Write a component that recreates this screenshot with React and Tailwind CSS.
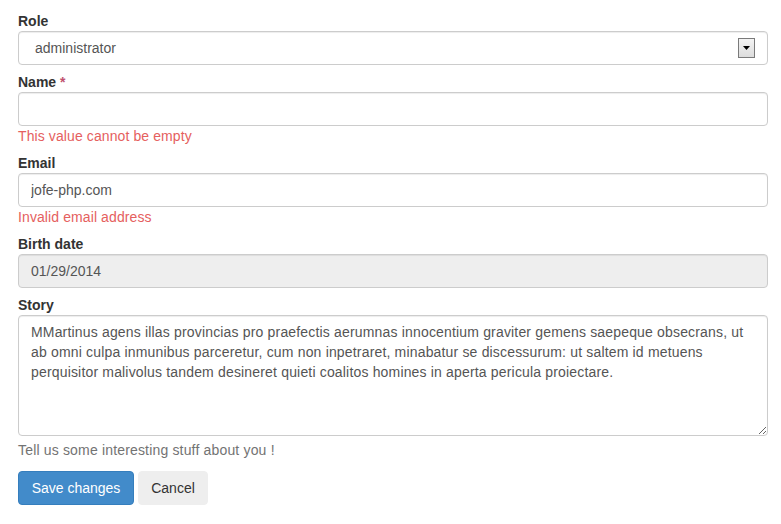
import React from 'react'

const story =
  'MMartinus agens illas provincias pro praefectis aerumnas innocentium graviter gemens saepeque obsecrans, ut ab omni culpa inmunibus parceretur, cum non inpetraret, minabatur se discessurum: ut saltem id metuens perquisitor malivolus tandem desineret quieti coalitos homines in aperta pericula proiectare.'

const baseCls =
  'block w-full h-[34px] px-3 border border-[#ccc] rounded text-[14px] leading-5 text-[#555] shadow-[inset_0_1px_1px_rgba(0,0,0,0.075)] outline-none'

const Label = ({ children }) => (
  <label className="block text-[14px] leading-5 font-bold text-[#333]">{children}</label>
)

const ErrorText = ({ children }) => (
  <p className="text-[14px] leading-5 text-[#e5605e] tracking-[0.1px]">{children}</p>
)

export default function App() {
  return (
    <div className="w-[781px] h-[524px] bg-white pl-[18px] pr-[13px] pt-[11px] font-['Liberation_Sans',Arial,sans-serif]">
      <form className="flex flex-col" onSubmit={(e) => e.preventDefault()}>
        <div className="mb-[7px]">
          <Label>Role</Label>
          <div className="relative">
            <select
              defaultValue="administrator"
              className={baseCls + ' bg-white appearance-none pl-4'}
            >
              <option>administrator</option>
              <option>editor</option>
              <option>user</option>
            </select>
            <div className="absolute right-[13px] top-[7px] w-[17px] h-[20px] border border-[#7a7a7a] bg-gradient-to-b from-[#f4f4f4] to-[#dcdcdc] flex items-center justify-center pointer-events-none">
              <svg width="7" height="4" viewBox="0 0 7 4">
                <path d="M0 0h7L3.5 4z" fill="#000" />
              </svg>
            </div>
          </div>
        </div>

        <div className="mb-[7px]">
          <Label>
            Name <span className="text-[#c0506e]">*</span>
          </Label>
          <input type="text" defaultValue="" className={baseCls + ' bg-white'} />
          <ErrorText>This value cannot be empty</ErrorText>
        </div>

        <div className="mb-[7px]">
          <Label>Email</Label>
          <input type="text" defaultValue="jofe-php.com" className={baseCls + ' bg-white'} />
          <ErrorText>Invalid email address</ErrorText>
        </div>

        <div className="mb-[7px]">
          <Label>Birth date</Label>
          <input
            type="text"
            defaultValue="01/29/2014"
            disabled
            className={baseCls + ' bg-[#eee]'}
          />
        </div>

        <div className="mb-[11px]">
          <Label>Story</Label>
          <textarea
            defaultValue={story}
            className="block w-full h-[121px] pl-3 pr-4 py-[6px] border border-[#ccc] rounded bg-white text-[14px] leading-5 tracking-[0.17px] text-[#555] shadow-[inset_0_1px_1px_rgba(0,0,0,0.075)] outline-none resize"
          />
          <p className="mt-1 text-[14px] leading-5 tracking-[0.17px] text-[#737373]">
            Tell us some interesting stuff about you !
          </p>
        </div>

        <div className="flex gap-1">
          <button
            type="submit"
            className="w-[116px] h-[34px] rounded border border-[#357ebd] bg-[#428bca] text-white text-[14px] leading-5"
          >
            Save changes
          </button>
          <button
            type="button"
            className="w-[70px] h-[34px] rounded border border-[#eee] bg-[#eee] text-[#333] text-[14px] leading-5"
          >
            Cancel
          </button>
        </div>
      </form>
    </div>
  )
}
